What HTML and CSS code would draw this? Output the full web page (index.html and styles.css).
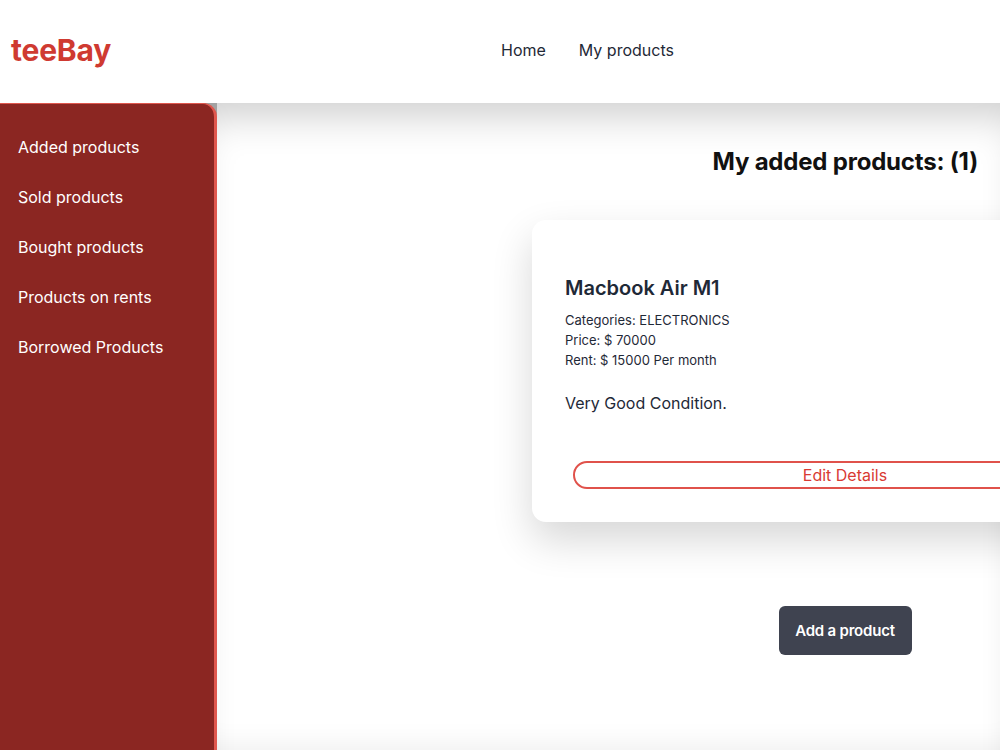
FILE: index.html
```html
<!DOCTYPE html>
<html lang="en">
<head>
  <meta charset="UTF-8" />
  <title>teeBay - My products</title>
  <link rel="stylesheet" href="styles.css">
</head>
<body>

<header class="topbar">
  <div class="logo">teeBay</div>
  <nav class="nav">
    <a href="#">Home</a>
    <a href="#">My products</a>
  </nav>
</header>

<div class="layout">
  <aside class="sidebar">
    <a href="#">Added products</a>
    <a href="#">Sold products</a>
    <a href="#">Bought products</a>
    <a href="#">Products on rents</a>
    <a href="#">Borrowed Products</a>
  </aside>

  <main class="main">
    <h2 class="page-title">My added products: (1)</h2>

    <div class="content">
      <div class="card">
        <h3 class="card-title">Macbook Air M1</h3>
        <div class="card-info">
          <div>Categories: ELECTRONICS</div>
          <div>Price: $ 70000</div>
          <div>Rent: $ 15000 Per month</div>
        </div>
        <p class="card-desc">Very Good Condition.</p>
        <button class="btn-edit">Edit Details</button>
      </div>

      <button class="btn-add">Add a product</button>
    </div>
  </main>
</div>

</body>
</html>
```

FILE: styles.css
```css
html, body { margin: 0; height: 100%; overflow: hidden; }
body { font-family: Inter, "Noto Sans", sans-serif; color: #1f2937; background: #fff; }
a { text-decoration: none; color: inherit; }

.topbar { height: 103px; box-sizing: border-box; padding-bottom: 3px; display: flex; align-items: center; background: #fff; }
.logo { width: 501px; box-sizing: border-box; font-size: 30px; font-weight: 700; color: #cf3a31; padding-left: 11px; letter-spacing: -0.2px; }
.nav { display: flex; gap: 33px; font-size: 16px; color: #1f2937; }

.layout { display: flex; height: calc(100% - 103px); background: #a3a3a3; }

.sidebar { width: 217px; flex-shrink: 0; background: #8b2622; border-top: 1px solid #e0574e; border-right: 3px solid #e0574e; border-top-right-radius: 14px; padding-top: 18px; box-sizing: border-box; display: flex; flex-direction: column; }
.sidebar a { color: #fff; font-size: 16px; line-height: 24px; padding: 13px 18px; }

.main { flex: 1; background: #fff; overflow: hidden; box-shadow: inset 0 34px 40px -22px rgba(0,0,0,0.2), inset 0 -30px 30px -28px rgba(0,0,0,0.08); }
.page-title { margin: 0; padding: 44px 22px 0 0; text-align: right; font-size: 24px; line-height: 30px; font-weight: 700; color: #111; letter-spacing: -0.2px; }

.content { width: 626px; margin: 43px 0 0 315px; display: flex; flex-direction: column; align-items: center; }

.card { width: 100%; box-sizing: border-box; background: #fff; border-radius: 14px; padding: 54px 33px 33px; box-shadow: 0 18px 40px rgba(0,0,0,0.16); }
.card-title { margin: 0; font-size: 20px; line-height: 28px; font-weight: 600; color: #1f2937; }
.card-info { margin-top: 8px; font-size: 13px; line-height: 20px; color: #1f2937; }
.card-desc { margin: 21px 0 0; font-size: 16px; line-height: 24px; color: #1f2937; }
.btn-edit { display: block; width: calc(100% - 16px); margin: 46px 8px 0; height: 28px; border: 2px solid #e0524b; border-radius: 14px; background: #fff; color: #d93a33; font-family: inherit; font-size: 16px; }

.btn-add { margin-top: 84px; width: 133px; height: 49px; border: none; border-radius: 6px; background: #3f4350; color: #fff; font-family: inherit; font-size: 15px; font-weight: 600; letter-spacing: -0.2px; }
```
